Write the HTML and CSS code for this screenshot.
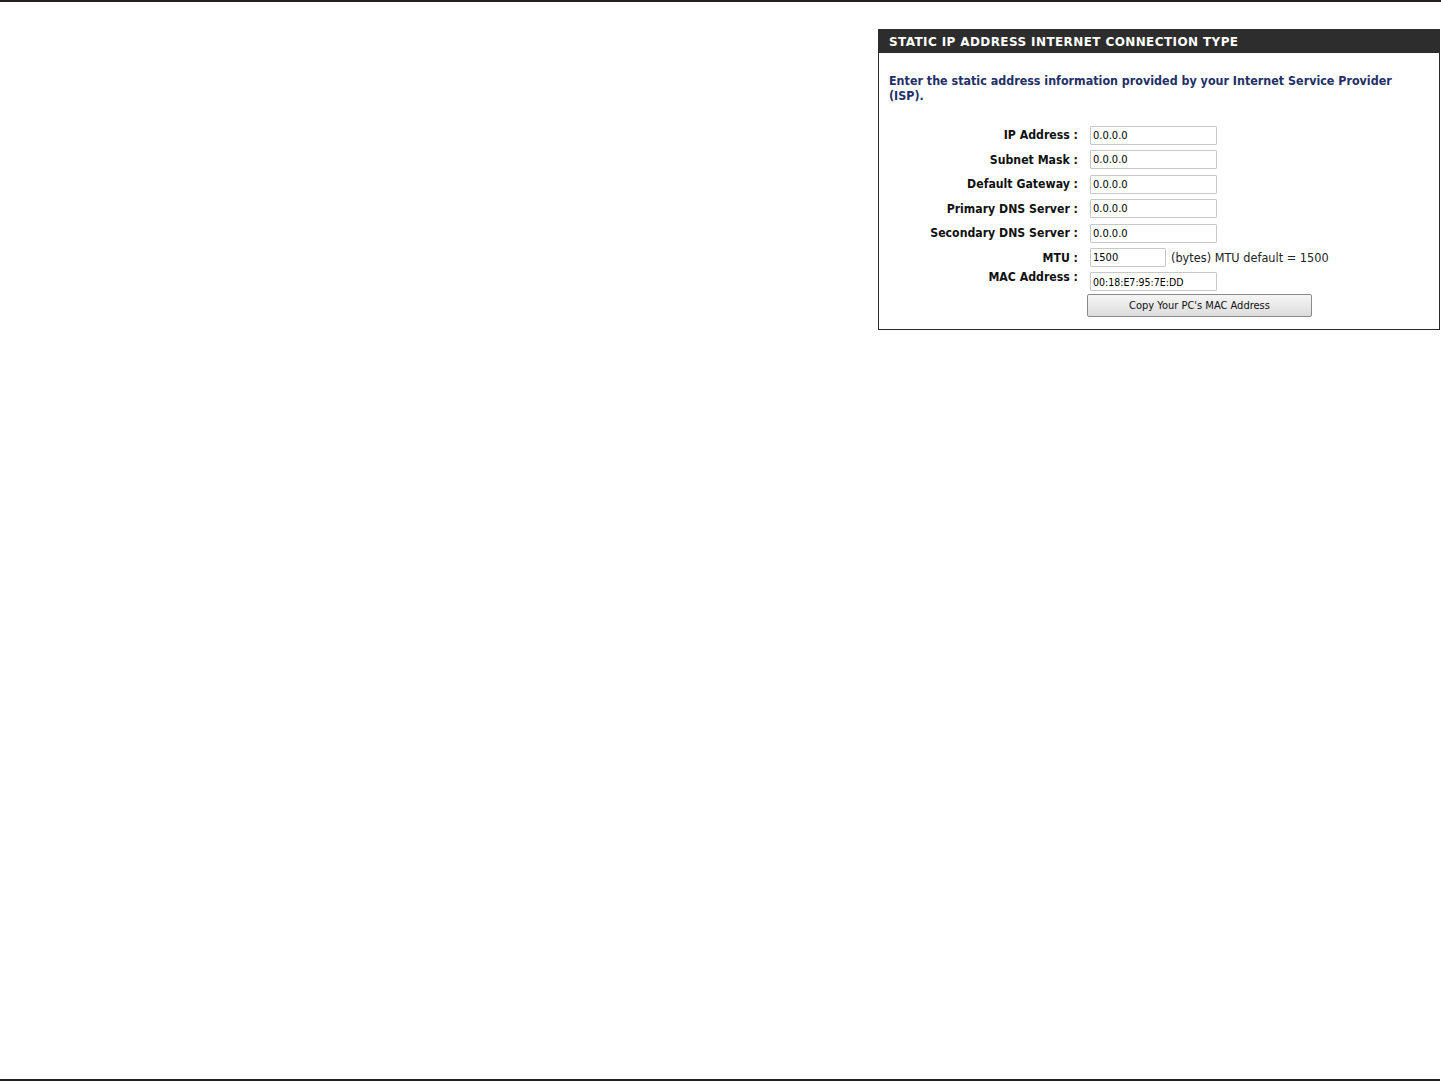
FILE: index.html
```html
<!DOCTYPE html>
<html>
<head>
<meta charset="utf-8">
<link rel="stylesheet" href="styles.css">
</head>
<body>
<div class="page">
  <div class="rule top"></div>
  <div class="content">
    <div class="box">
      <div class="box-head">STATIC IP ADDRESS INTERNET CONNECTION TYPE</div>
      <p class="intro">Enter the static address information provided by your Internet Service Provider (ISP).</p>
      <div class="form">
        <label class="lbl">IP Address :</label>
        <div class="field"><input class="inp" type="text" value="0.0.0.0"></div>
        <label class="lbl">Subnet Mask :</label>
        <div class="field"><input class="inp" type="text" value="0.0.0.0"></div>
        <label class="lbl">Default Gateway :</label>
        <div class="field"><input class="inp" type="text" value="0.0.0.0"></div>
        <label class="lbl">Primary DNS Server :</label>
        <div class="field"><input class="inp" type="text" value="0.0.0.0"></div>
        <label class="lbl">Secondary DNS Server :</label>
        <div class="field"><input class="inp" type="text" value="0.0.0.0"></div>
        <label class="lbl">MTU :</label>
        <div class="field"><input class="inp short" type="text" value="1500"><span class="note">(bytes) MTU default = 1500</span></div>
        <label class="lbl top-al">MAC Address :</label>
        <div class="field mac">
          <input class="inp macinp" type="text" value="00:18:E7:95:7E:DD">
          <button class="btn" type="button">Copy Your PC's MAC Address</button>
        </div>
      </div>
    </div>
  </div>
  <div class="rule bottom"></div>
</div>
</body>
</html>
```
FILE: styles.css
```css
html, body {
  margin: 0;
  padding: 0;
  background: #ffffff;
}
.page {
  height: 1081px;
  display: flex;
  flex-direction: column;
  overflow: hidden;
}
.rule {
  background: #231f20;
  height: 2px;
  flex: none;
}
.rule.bottom {
  margin-top: auto;
  width: 1440px;
}
.content {
  display: flex;
  justify-content: flex-end;
  padding-top: 27px;
  padding-right: 1px;
}
.box {
  width: 560px;
  border: 1px solid #2a2a2a;
  border-top: none;
  padding-bottom: 12px;
  font-family: "DejaVu Sans Condensed", "DejaVu Sans", sans-serif;
}
.box-head {
  background: #2d2d2d;
  color: #ffffff;
  font-family: "DejaVu Sans", sans-serif;
  font-weight: bold;
  font-size: 12px;
  height: 24px;
  line-height: 26px;
  margin-left: -1px;
  margin-right: -1px;
  padding-left: 11px;
  letter-spacing: 0.4px;
}
.intro {
  margin: 20px 0 0 10px;
  width: 520px;
  color: #233068;
  font-weight: bold;
  font-size: 12.4px;
  line-height: 15px;
}
.form {
  display: grid;
  grid-template-columns: 199px 1fr;
  column-gap: 12px;
  grid-template-rows: repeat(6, 24.5px) auto;
  margin-top: 20px;
}
.lbl {
  text-align: right;
  font-weight: bold;
  font-size: 12.2px;
  color: #111111;
  display: flex;
  align-items: center;
  justify-content: flex-end;
}
.lbl.top-al {
  align-items: flex-start;
  padding-top: 0px;
}
.field {
  display: flex;
  align-items: center;
}
.inp {
  box-sizing: border-box;
  width: 127px;
  height: 19px;
  border: 1px solid #c8c8c8;
  border-radius: 1px;
  padding: 0 2px;
  font-family: "DejaVu Sans Condensed", "DejaVu Sans", sans-serif;
  font-size: 11px;
  color: #000;
  margin: 0;
  background: #fff;
  flex: none;
}
.inp.short {
  width: 76px;
}
.note {
  font-size: 12.6px;
  color: #222;
  margin-left: 5px;
  font-family: "DejaVu Sans Condensed", "DejaVu Sans", sans-serif;
}
.field.mac {
  flex-direction: column;
  align-items: flex-start;
  justify-content: flex-start;
}
.macinp {
  margin-top: 2px;
  font-size: 10.5px;
}
.btn {
  flex: none;
  margin-top: 3px;
  margin-left: -3px;
  width: 225px;
  height: 23px;
  border: 1px solid #8a8a8a;
  border-radius: 2px;
  background: linear-gradient(#f6f6f6, #dcdcdc);
  font-family: "DejaVu Sans Condensed", "DejaVu Sans", sans-serif;
  font-size: 11px;
  color: #111;
  padding: 0;
}
```
